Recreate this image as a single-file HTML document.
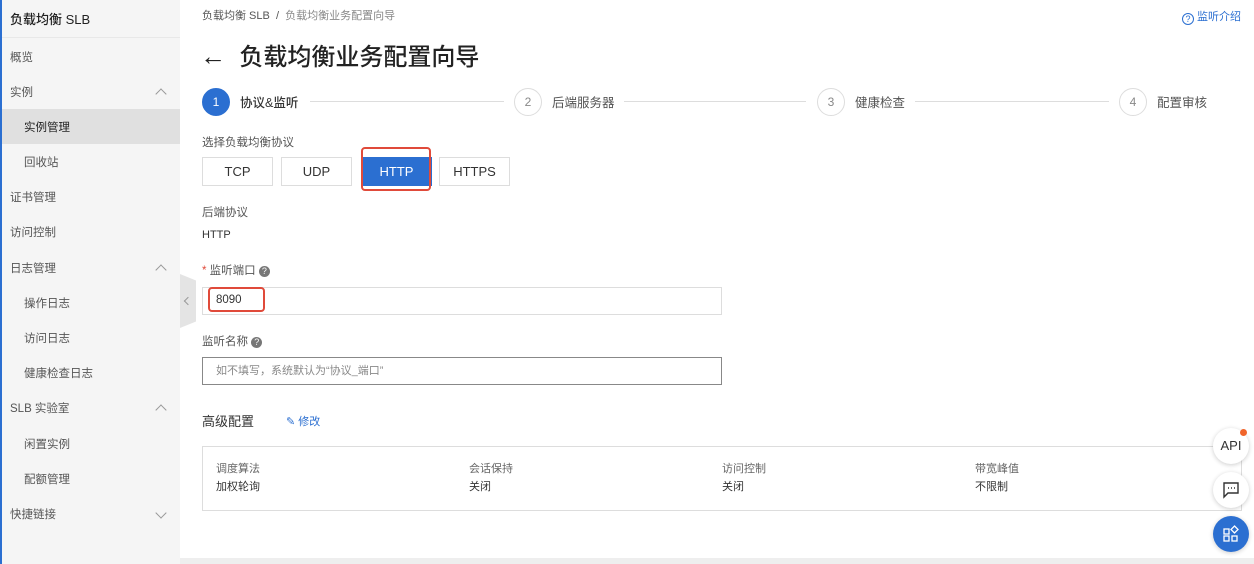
<!DOCTYPE html>
<html><head><meta charset="utf-8"><style>
*{margin:0;padding:0;box-sizing:border-box}
body{width:1254px;height:564px;overflow:hidden;background:#fff;font-family:"Liberation Sans","Noto Sans CJK SC",sans-serif;color:#333;position:relative}
.abs{position:absolute}
#side{left:0;top:0;width:180px;height:564px;background:#f5f5f5;border-left:2px solid #2b6fd1}
.si{position:absolute;left:8px;font-size:11.5px;color:#555;line-height:1.5}
.sub{left:22px}
.chev{position:absolute;left:155px;width:8px;height:8px;border-left:1.3px solid #999;border-top:1.3px solid #999;transform:rotate(45deg)}
.chev.d{transform:rotate(225deg)}
.t{position:absolute;font-size:11.5px;color:#555;white-space:nowrap;line-height:1.5}
.btn{position:absolute;top:157px;height:29px;border:1px solid #ddd;font-size:13px;color:#333;text-align:center;line-height:27px;width:71px}
.circ{position:absolute;width:28px;height:28px;border-radius:50%;border:1px solid #ddd;text-align:center;line-height:26px;font-size:12px;color:#888;top:88px;background:#fff}
.line{position:absolute;top:101px;height:1px;background:#ddd}
.stl{position:absolute;top:94px;font-size:12.5px;color:#555;line-height:1.5}
.fab{position:absolute;left:1213px;width:36px;height:36px;border-radius:50%;background:#fff;box-shadow:0 1px 5px rgba(0,0,0,.2);text-align:center;line-height:36px;font-size:13px;color:#333}
</style></head><body>
<div id="side" class="abs">
 <div class="si" style="top:10px;font-size:13px;color:#222;font-weight:500">负载均衡 SLB</div>
 <div class="abs" style="left:0;top:37px;width:178px;height:1px;background:#e8e8e8"></div>
 <div class="si" style="top:50px">概览</div>
 <div class="si" style="top:85px">实例</div><div class="chev" style="top:90px"></div>
 <div class="abs" style="left:0;top:109px;width:178px;height:35px;background:#e0e0e0"></div>
 <div class="si sub" style="top:120px;color:#222">实例管理</div>
 <div class="si sub" style="top:155px">回收站</div>
 <div class="si" style="top:190px">证书管理</div>
 <div class="si" style="top:225px">访问控制</div>
 <div class="si" style="top:261px">日志管理</div><div class="chev" style="top:266px"></div>
 <div class="si sub" style="top:296px">操作日志</div>
 <div class="si sub" style="top:331px">访问日志</div>
 <div class="si sub" style="top:366px">健康检查日志</div>
 <div class="si" style="top:401px">SLB 实验室</div><div class="chev" style="top:406px"></div>
 <div class="si sub" style="top:437px">闲置实例</div>
 <div class="si sub" style="top:472px">配额管理</div>
 <div class="si" style="top:507px">快捷链接</div><div class="chev d" style="top:509px"></div>
</div>
<div class="abs" style="left:180px;top:274px;width:16px;height:54px;background:#e4e4e4;clip-path:polygon(0 0,100% 12%,100% 88%,0 100%)"></div>
<div class="abs" style="left:185px;top:298px;width:6px;height:6px;border-left:1px solid #999;border-bottom:1px solid #999;transform:rotate(45deg)"></div>

<div class="t" style="left:202px;top:8px;font-size:11px">负载均衡 SLB &nbsp;/&nbsp; <span style="color:#888">负载均衡业务配置向导</span></div>
<div class="t" style="left:1182px;top:9px;font-size:11px;color:#2b6fd1"><span style="display:inline-block;width:12px;height:12px;border:1px solid #2b6fd1;border-radius:50%;font-size:9px;text-align:center;line-height:10px;vertical-align:-2px">?</span> 监听介绍</div>
<div class="t" style="left:200px;top:40px;font-size:24px;color:#222;font-weight:500;line-height:1.3"><span style="font-size:26px">←</span>&nbsp; 负载均衡业务配置向导</div>

<div class="circ" style="left:202px;background:#2b6fd1;border-color:#2b6fd1;color:#fff">1</div>
<div class="stl" style="left:240px;color:#333;font-weight:500">协议&amp;监听</div>
<div class="line" style="left:310px;width:194px"></div>
<div class="circ" style="left:514px">2</div>
<div class="stl" style="left:552px">后端服务器</div>
<div class="line" style="left:624px;width:182px"></div>
<div class="circ" style="left:817px">3</div>
<div class="stl" style="left:855px">健康检查</div>
<div class="line" style="left:915px;width:194px"></div>
<div class="circ" style="left:1119px">4</div>
<div class="stl" style="left:1157px">配置审核</div>

<div class="t" style="left:202px;top:135px">选择负载均衡协议</div>
<div class="btn" style="left:202px">TCP</div>
<div class="btn" style="left:281px">UDP</div>
<div class="btn" style="left:361px;background:#2b6fd1;border-color:#2b6fd1;color:#fff">HTTP</div>
<div class="abs" style="left:361px;top:147px;width:70px;height:44px;border:2px solid #e04a3a;border-radius:4px"></div>
<div class="btn" style="left:439px">HTTPS</div>

<div class="t" style="left:202px;top:205px">后端协议</div>
<div class="t" style="left:202px;top:227px;color:#333;font-size:11px">HTTP</div>
<div class="t" style="left:202px;top:263px"><span style="color:#e04a3a">*</span> 监听端口 <span style="display:inline-block;width:11px;height:11px;border-radius:50%;background:#777;color:#fff;font-size:9px;text-align:center;line-height:11px">?</span></div>
<div class="abs" style="left:202px;top:287px;width:520px;height:28px;border:1px solid #ddd"></div>
<div class="t" style="left:216px;top:292px;color:#333">8090</div>
<div class="abs" style="left:208px;top:287px;width:57px;height:25px;border:2px solid #e04a3a;border-radius:4px"></div>
<div class="t" style="left:202px;top:334px">监听名称 <span style="display:inline-block;width:11px;height:11px;border-radius:50%;background:#777;color:#fff;font-size:9px;text-align:center;line-height:11px">?</span></div>
<div class="abs" style="left:202px;top:357px;width:520px;height:28px;border:1px solid #888"></div>
<div class="t" style="left:216px;top:363px;font-size:11px;color:#888">如不填写，系统默认为“协议_端口”</div>

<div class="t" style="left:202px;top:412px;font-size:13px;color:#333">高级配置</div>
<div class="t" style="left:286px;top:414px;color:#2b6fd1;font-size:11px">✎ 修改</div>
<div class="abs" style="left:202px;top:446px;width:1040px;height:65px;border:1px solid #ddd"></div>
<div class="t" style="left:216px;top:461px;font-size:11px;color:#666">调度算法</div><div class="t" style="left:216px;top:479px;font-size:11px;color:#333">加权轮询</div>
<div class="t" style="left:469px;top:461px;font-size:11px;color:#666">会话保持</div><div class="t" style="left:469px;top:479px;font-size:11px;color:#333">关闭</div>
<div class="t" style="left:722px;top:461px;font-size:11px;color:#666">访问控制</div><div class="t" style="left:722px;top:479px;font-size:11px;color:#333">关闭</div>
<div class="t" style="left:975px;top:461px;font-size:11px;color:#666">带宽峰值</div><div class="t" style="left:975px;top:479px;font-size:11px;color:#333">不限制</div>

<div class="abs" style="left:180px;top:558px;width:1074px;height:6px;background:#eee"></div>

<div class="fab" style="top:428px">API</div>
<div class="abs" style="left:1240px;top:429px;width:7px;height:7px;border-radius:50%;background:#f0642a"></div>
<div class="fab" style="top:472px"><svg width="18" height="18" viewBox="0 0 18 18" style="margin-top:9px"><path d="M2 2h14v10H6l-4 4z" fill="none" stroke="#333" stroke-width="1.4"/><path d="M6 7h1M9 7h1M12 7h1" stroke="#333" stroke-width="1.6"/></svg></div>
<div class="fab" style="top:516px;background:#2b6fd1"><svg width="18" height="18" viewBox="0 0 18 18" style="margin-top:9px"><g fill="none" stroke="#fff" stroke-width="1.3"><rect x="2" y="4" width="5" height="5"/><rect x="2" y="11" width="5" height="5"/><rect x="10" y="11" width="5" height="5"/><path d="M12.5 1l3.5 3.5-3.5 3.5-3.5-3.5z"/></g></svg></div>
</body></html>
